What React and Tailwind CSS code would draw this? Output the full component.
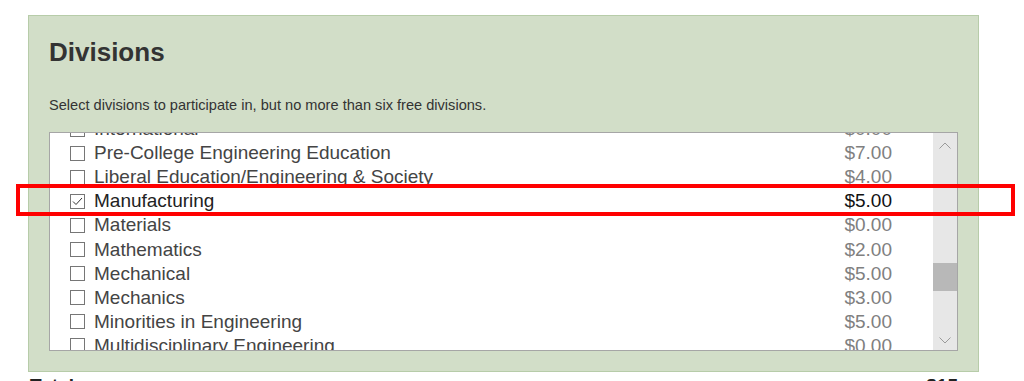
import React from 'react';

const divisions = [
  { name: 'International', price: '$0.00' },
  { name: 'Pre-College Engineering Education', price: '$7.00' },
  { name: 'Liberal Education/Engineering & Society', price: '$4.00' },
  { name: 'Manufacturing', price: '$5.00', checked: true },
  { name: 'Materials', price: '$0.00' },
  { name: 'Mathematics', price: '$2.00' },
  { name: 'Mechanical', price: '$5.00' },
  { name: 'Mechanics', price: '$3.00' },
  { name: 'Minorities in Engineering', price: '$5.00' },
  { name: 'Multidisciplinary Engineering', price: '$0.00' },
];

const Checkbox = ({ checked }) => (
  <span className="w-[15px] h-[15px] border border-[#767676] bg-white flex items-center justify-center shrink-0">
    {checked && (
      <svg width="11" height="9" viewBox="0 0 11 9" fill="none">
        <path d="M1 4.5 L4 7.5 L10 1" stroke="#333" strokeWidth="1" />
      </svg>
    )}
  </span>
);

const App = () => {
  return (
    <div className="relative w-[1024px] h-[381px] overflow-hidden bg-white font-['Liberation_Sans',Arial,sans-serif]">
      <div className="ml-[28px] mt-[15px] w-[951px] h-[357px] bg-[#d2dec8] border border-[#b7cca9] pl-[20px] pr-[20px] pt-[21px]">
        <h2 className="text-[26px] font-bold text-[#333] leading-[30px]">Divisions</h2>
        <p className="mt-[30px] text-[14.6px] text-[#333] leading-[16px]">
          Select divisions to participate in, but no more than six free divisions.
        </p>
        <div className="mt-[19px] h-[219px] border border-[#a6a6a6] bg-white flex">
          <div className="flex-1 overflow-hidden">
            <div className="-mt-[16px]">
              {divisions.map((d) => (
                <div key={d.name} className="h-[24.1px] flex items-center pl-[20px] pr-[41px]">
                  <Checkbox checked={d.checked} />
                  <span className={`ml-[9px] flex-1 text-[19px] leading-[20px] ${d.checked ? 'text-[#222]' : 'text-[#444]'}`}>
                    {d.name}
                  </span>
                  <span className={`text-[19px] leading-[20px] ${d.checked ? 'text-[#111]' : 'text-[#808080]'}`}>
                    {d.price}
                  </span>
                </div>
              ))}
            </div>
          </div>
          <div className="w-[24px] bg-[#e7e7e7] flex flex-col items-center">
            <svg className="mt-[9px]" width="12" height="7" viewBox="0 0 12 7" fill="none">
              <path d="M0.5 6.5 L6 1 L11.5 6.5" stroke="#9a9a9a" strokeWidth="1" />
            </svg>
            <div className="mt-[114px] w-full h-[28px] bg-[#b8b8b8]" />
            <svg className="mt-[46px]" width="12" height="7" viewBox="0 0 12 7" fill="none">
              <path d="M0.5 0.5 L6 6 L11.5 0.5" stroke="#9a9a9a" strokeWidth="1" />
            </svg>
          </div>
        </div>
      </div>
      <div className="flex justify-between pl-[30px] pr-[66px] mt-[3px] text-[19px] font-bold text-[#222] leading-[22px]">
        <span>Total</span>
        <span>$15</span>
      </div>
      <div className="absolute left-[16px] top-[184px] w-[999px] h-[32px] border-[4px] border-[#ff0000]" />
    </div>
  );
};

export default App;
